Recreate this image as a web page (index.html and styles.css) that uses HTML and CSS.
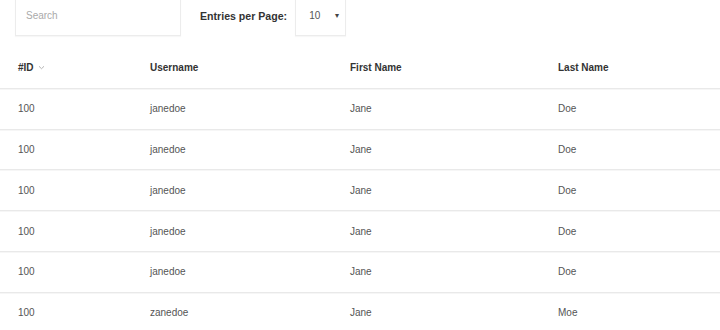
FILE: index.html
```html
<!DOCTYPE html>
<html>
<head>
<meta charset="utf-8">
<link rel="stylesheet" href="styles.css">
</head>
<body>
<div class="page">
  <div class="toolbar">
    <div class="search">Search</div>
    <div class="entries-label">Entries per Page:</div>
    <div class="select"><span>10</span><span class="caret">&#9662;</span></div>
  </div>
  <div class="table">
    <div class="row head">
      <div class="cell">#ID <svg class="chev" width="7" height="5" viewBox="0 0 7 5"><path d="M1 1.3 L3.5 3.7 L6 1.3" fill="none" stroke="#aaa" stroke-width="0.9"/></svg></div>
      <div class="cell">Username</div>
      <div class="cell">First Name</div>
      <div class="cell">Last Name</div>
    </div>
    <div class="row"><div class="cell">100</div><div class="cell">janedoe</div><div class="cell">Jane</div><div class="cell">Doe</div></div>
    <div class="row"><div class="cell">100</div><div class="cell">janedoe</div><div class="cell">Jane</div><div class="cell">Doe</div></div>
    <div class="row"><div class="cell">100</div><div class="cell">janedoe</div><div class="cell">Jane</div><div class="cell">Doe</div></div>
    <div class="row"><div class="cell">100</div><div class="cell">janedoe</div><div class="cell">Jane</div><div class="cell">Doe</div></div>
    <div class="row"><div class="cell">100</div><div class="cell">janedoe</div><div class="cell">Jane</div><div class="cell">Doe</div></div>
    <div class="row"><div class="cell">100</div><div class="cell">zanedoe</div><div class="cell">Jane</div><div class="cell">Moe</div></div>
  </div>
</div>
</body>
</html>
```

FILE: styles.css
```css
html, body {
  margin: 0;
  padding: 0;
  background: #fff;
  overflow: hidden;
}
body {
  font-family: "Liberation Sans", Arial, sans-serif;
  font-size: 10px;
  color: #555;
}
.toolbar {
  display: flex;
  align-items: center;
  margin-top: -5px;
  padding-left: 15px;
  height: 41px;
}
.search {
  box-sizing: border-box;
  width: 166px;
  height: 41px;
  border: 1px solid #ececec;
  box-shadow: 0 1px 1px rgba(0,0,0,0.03);
  display: flex;
  align-items: center;
  padding-left: 10px;
  color: #aaa;
}
.entries-label {
  margin-left: 19px;
  font-weight: bold;
  font-size: 10.6px;
  color: #333;
}
.select {
  box-sizing: border-box;
  margin-left: 8px;
  width: 51px;
  height: 41px;
  border: 1px solid #ececec;
  box-shadow: 0 1px 1px rgba(0,0,0,0.03);
  display: flex;
  align-items: center;
  justify-content: space-between;
  padding: 0 6px 0 13px;
  color: #555;
}
.caret {
  font-size: 8px;
  color: #444;
}
.table {
  margin-top: 12px;
}
.row {
  display: grid;
  grid-template-columns: 132px 200px 208px 1fr;
  padding: 0 18px;
  height: 39.8px;
  align-items: center;
  border-bottom: 1px solid #e9e9e9;
  box-shadow: 0 1px 0 #f6f6f6;
}
.row.head .cell {
  font-weight: bold;
  color: #333;
}
.chev {
  margin-left: 2px;
  vertical-align: 1px;
}
```
